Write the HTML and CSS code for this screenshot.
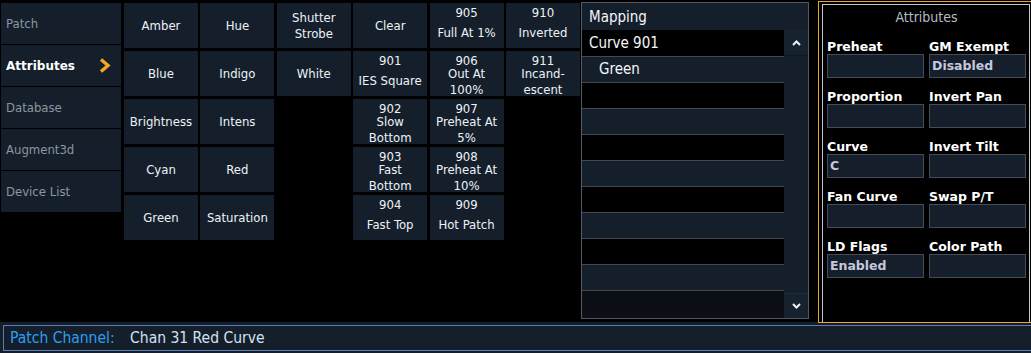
FILE: index.html
```html
<!DOCTYPE html>
<html>
  <head>
    <link rel="stylesheet" href="styles.css">
  </head>
  <body>
    <div class="main">
      <nav class="tabs">
        <div class="tab">Patch</div>
        <div class="tab active">Attributes
          <svg class="tab-arrow" width="12" height="15" viewBox="0 0 12 15"><path d="M2 1.5 L9 7.5 L2 13.5" fill="none" stroke="#f5a623" stroke-width="3.4"/></svg>
        </div>
        <div class="tab">Database</div>
        <div class="tab">Augment3d</div>
        <div class="tab">Device List</div>
      </nav>

      <div class="keys">
        <div class="key">Amber</div>
        <div class="key">Hue</div>
        <div class="key">Shutter<br>Strobe</div>
        <div class="key">Clear</div>
        <div class="key curve"><div class="num">905</div><div class="label">Full At 1%</div></div>
        <div class="key curve"><div class="num">910</div><div class="label">Inverted</div></div>

        <div class="key">Blue</div>
        <div class="key">Indigo</div>
        <div class="key">White</div>
        <div class="key curve"><div class="num">901</div><div class="label">IES Square</div></div>
        <div class="key curve"><div class="num">906</div><div class="label">Out At<br>100%</div></div>
        <div class="key curve"><div class="num">911</div><div class="label">Incand-<br>escent</div></div>

        <div class="key">Brightness</div>
        <div class="key">Intens</div>
        <div class="empty"></div>
        <div class="key curve"><div class="num">902</div><div class="label">Slow<br>Bottom</div></div>
        <div class="key curve"><div class="num">907</div><div class="label">Preheat At<br>5%</div></div>
        <div class="empty"></div>

        <div class="key">Cyan</div>
        <div class="key">Red</div>
        <div class="empty"></div>
        <div class="key curve"><div class="num">903</div><div class="label">Fast<br>Bottom</div></div>
        <div class="key curve"><div class="num">908</div><div class="label">Preheat At<br>10%</div></div>
        <div class="empty"></div>

        <div class="key">Green</div>
        <div class="key">Saturation</div>
        <div class="empty"></div>
        <div class="key curve"><div class="num">904</div><div class="label">Fast Top</div></div>
        <div class="key curve"><div class="num">909</div><div class="label">Hot Patch</div></div>
        <div class="empty"></div>
      </div>

      <section class="mapping">
        <div class="mapping-title">Mapping</div>
        <div class="mapping-body">
          <div class="rows">
            <div class="row">Curve 901</div>
            <div class="row sub">Green</div>
            <div class="row"></div>
            <div class="row"></div>
            <div class="row"></div>
            <div class="row"></div>
            <div class="row"></div>
            <div class="row"></div>
            <div class="row"></div>
            <div class="row"></div>
            <div class="row last"></div>
          </div>
          <div class="scrollbar">
            <div class="scroll-btn up">
              <svg width="9" height="6" viewBox="0 0 9 6"><path d="M1 5 L4.5 1.5 L8 5" fill="none" stroke="#f0f0f0" stroke-width="2"/></svg>
            </div>
            <div class="scroll-track"></div>
            <div class="scroll-btn down">
              <svg width="9" height="6" viewBox="0 0 9 6"><path d="M1 1 L4.5 4.5 L8 1" fill="none" stroke="#f0f0f0" stroke-width="2"/></svg>
            </div>
          </div>
        </div>
      </section>

      <section class="attrs">
        <div class="attrs-inner">
          <div class="attrs-title">Attributes</div>
          <div class="fields">
            <div class="field"><div class="field-label">Preheat</div><div class="field-box"></div></div>
            <div class="field"><div class="field-label">GM Exempt</div><div class="field-box">Disabled</div></div>
            <div class="field"><div class="field-label">Proportion</div><div class="field-box"></div></div>
            <div class="field"><div class="field-label">Invert Pan</div><div class="field-box"></div></div>
            <div class="field"><div class="field-label">Curve</div><div class="field-box">C</div></div>
            <div class="field"><div class="field-label">Invert Tilt</div><div class="field-box"></div></div>
            <div class="field"><div class="field-label">Fan Curve</div><div class="field-box"></div></div>
            <div class="field"><div class="field-label">Swap P/T</div><div class="field-box"></div></div>
            <div class="field"><div class="field-label">LD Flags</div><div class="field-box">Enabled</div></div>
            <div class="field"><div class="field-label">Color Path</div><div class="field-box"></div></div>
          </div>
        </div>
      </section>
    </div>

    <div class="cmdline">
      <div class="cmd-box">
        <span class="cmd-prompt">Patch Channel:</span>
        <span class="cmd-text">Chan 31 Red Curve</span>
      </div>
    </div>
  </body>
</html>
```

FILE: styles.css
```css
body {
  margin: 0;
  padding: 0;
  background-color: #000;
  color: #eef2f6;
  font-family: "DejaVu Sans Condensed", "DejaVu Sans", sans-serif;
  font-stretch: condensed;
  overflow: hidden;
  width: 1031px;
  height: 353px;
}
.main {
  display: flex;
  align-items: flex-start;
  height: 322px;
}
.main > * {
  flex-shrink: 0;
}

/* left tabs */
.tabs {
  width: 120px;
  margin: 3px 0 0 1px;
}
.tab {
  display: flex;
  align-items: center;
  height: 41px;
  margin-bottom: 1px;
  padding-left: 5px;
  background-color: #151f2c;
  color: #8c969f;
  font-size: 13px;
}
.tab.active {
  color: #fff;
  font-family: "DejaVu Sans", sans-serif;
  font-stretch: normal;
  font-weight: bold;
  font-size: 12px;
}
.tab-arrow {
  margin-left: auto;
  margin-right: 10px;
}

/* key grid */
.keys {
  display: grid;
  grid-template-columns: repeat(6, 74px);
  grid-auto-rows: 45px;
  column-gap: 2.4px;
  row-gap: 3px;
  width: 456px;
  margin: 3px 0 0 3px;
}
.key {
  display: flex;
  flex-direction: column;
  align-items: center;
  justify-content: center;
  background-color: #151f2c;
  font-size: 13px;
  line-height: 16px;
  text-align: center;
}
.key.curve {
  justify-content: flex-start;
}
.num {
  height: 16px;
  margin-top: 2px;
}
.label {
  flex: 1;
  display: flex;
  align-items: center;
  justify-content: center;
  margin-top: -3px;
}

/* mapping list */
.mapping {
  width: 226px;
  height: 315px;
  margin: 2px 0 0 1px;
  border: 1px solid #55595f;
  display: flex;
  flex-direction: column;
}
.mapping-title {
  height: 27px;
  line-height: 28px;
  padding-left: 7px;
  background-color: #151f2c;
  font-size: 15px;
  color: #f4f6f8;
}
.mapping-body {
  flex: 1;
  display: flex;
}
.rows {
  flex: 1;
  display: flex;
  flex-direction: column;
  border-top: 1px solid #000;
}
.row {
  height: 25px;
  line-height: 25px;
  border-bottom: 1px solid #45494f;
  padding-left: 7px;
  font-size: 15px;
  color: #f4f6f8;
  background-color: #000;
}
.row:nth-child(even) {
  background-color: #151f2c;
}
.row.sub {
  padding-left: 17px;
}
.row.last {
  flex: 1;
  border-bottom: none;
  background-color: #0b0f15;
}
.scrollbar {
  width: 24px;
  display: flex;
  flex-direction: column;
  background-color: #151f2c;
}
.scroll-btn {
  display: flex;
  align-items: center;
  justify-content: center;
  background-color: #172230;
}
.scroll-btn.up {
  height: 25px;
  border-bottom: 1px solid #0f1720;
}
.scroll-btn.down {
  height: 24px;
  border-top: 1px solid #1f2b3a;
}
.scroll-track {
  flex: 1;
}

/* attributes panel */
.attrs {
  width: 208px;
  height: 318px;
  margin: 1px 0 0 9px;
  padding: 2px 3px 0 3px;
  border: 1px solid #e8a82a;
}
.attrs-inner {
  height: 317px;
  border: 1px solid #c4c8cc;
  border-bottom: none;
  padding: 0 3px 0 4px;
}
.attrs-title {
  height: 20px;
  line-height: 20px;
  margin-top: 2px;
  text-align: center;
  font-size: 14px;
  color: #b4bcc6;
}
.fields {
  display: grid;
  grid-template-columns: 97px 97px;
  column-gap: 5px;
  row-gap: 12px;
  margin-top: 13px;
}
.field-label {
  height: 14px;
  line-height: 14px;
  font-family: "DejaVu Sans", sans-serif;
  font-stretch: normal;
  font-weight: bold;
  font-size: 12.5px;
  color: #fff;
  white-space: nowrap;
}
.field-box {
  height: 22px;
  line-height: 22px;
  border: 1px solid #454c57;
  background-color: #151f2c;
  padding-left: 2px;
  font-family: "DejaVu Sans", sans-serif;
  font-stretch: normal;
  font-weight: bold;
  font-size: 12.5px;
  color: #c6c8dc;
}

/* command line */
.cmdline {
  height: 26px;
  padding: 3px 0 2px 3px;
  background-color: #151f2c;
}
.cmd-box {
  height: 24px;
  line-height: 24px;
  border: 1px solid #5a7db6;
  border-right: none;
  padding-left: 6px;
  font-size: 15.5px;
  white-space: nowrap;
}
.cmd-prompt {
  color: #2c9ff2;
}
.cmd-text {
  margin-left: 11px;
  color: #d2e2f0;
}
```
